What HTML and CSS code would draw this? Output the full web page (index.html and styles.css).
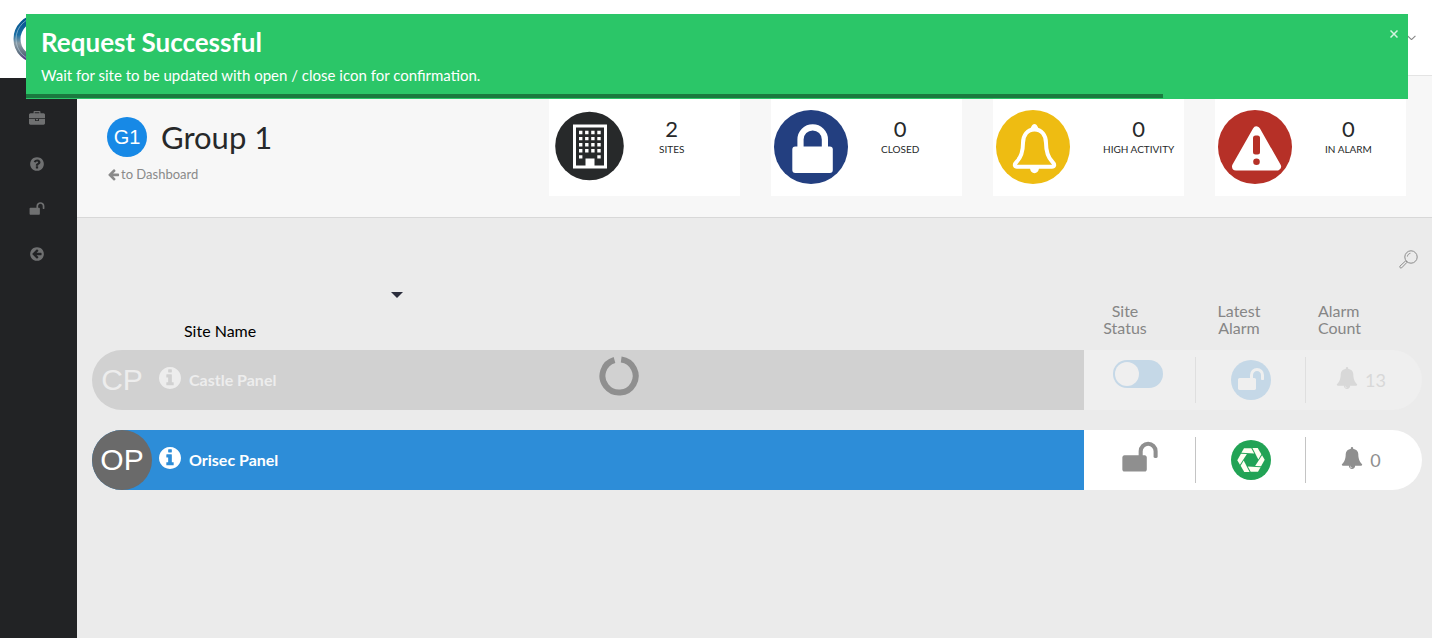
FILE: index.html
```
<!DOCTYPE html>
<html lang="en">
<head>
  <meta charset="UTF-8">
  <meta name="viewport" content="width=device-width, initial-scale=1">
  <title>Group 1</title>
  <link rel="stylesheet" href="styles.css">
</head>
<body>
  <!-- icon set -->
  <svg class="sprite" aria-hidden="true">
    <symbol id="i-briefcase" viewBox="0 0 1792 1792"><path d="M640 256h512v-128h-512v128zm1152 640v480q0 66-47 113t-113 47h-1472q-66 0-113-47t-47-113v-480h672v160q0 26 19 45t45 19h320q26 0 45-19t19-45v-160h672zm-768 0v128h-256v-128h256zm768-480v384h-1792v-384q0-66 47-113t113-47h352v-160q0-40 28-68t68-28h576q40 0 68 28t28 68v160h352q66 0 113 47t47 113z"/></symbol>
    <symbol id="i-question" viewBox="0 0 1792 1792"><path d="M1024 1376v-192q0-14-9-23t-23-9h-192q-14 0-23 9t-9 23v192q0 14 9 23t23 9h192q14 0 23-9t9-23zm256-672q0-88-55.5-163t-138.5-116-170-41q-243 0-371 213-15 24 8 42l132 100q7 6 19 6 16 0 25-12 53-68 86-92 34-24 86-24 48 0 85.5 26t37.5 59q0 38-20 61t-68 45q-63 28-115.5 86.5t-52.5 125.5v36q0 14 9 23t23 9h192q14 0 23-9t9-23q0-19 21.5-49.5t54.5-49.5q32-18 49-28.5t46-35 44.5-48 28-60.5 12.5-81zm384 192q0 209-103 385.5t-279.5 279.5-385.5 103-385.5-103-279.5-279.5-103-385.5 103-385.5 279.5-279.5 385.5-103 385.5 103 279.5 279.5 103 385.5z"/></symbol>
    <symbol id="i-unlock" viewBox="0 0 1792 1792"><path d="M1728 576v256q0 26-19 45t-45 19h-64q-26 0-45-19t-19-45v-256q0-106-75-181t-181-75-181 75-75 181v192h96q40 0 68 28t28 68v576q0 40-28 68t-68 28h-960q-40 0-68-28t-28-68v-576q0-40 28-68t68-28h672v-192q0-185 131.5-316.5t316.5-131.5 316.5 131.5 131.5 316.5z"/></symbol>
    <symbol id="i-circle-left" viewBox="0 0 1792 1792"><path d="M1408 960v-128q0-26-19-45t-45-19h-502l189-189q19-19 19-45t-19-45l-91-91q-18-18-45-18t-45 18l-362 362-91 91q-18 18-18 45t18 45l91 91 362 362q18 18 45 18t45-18l91-91q18-18 18-45t-18-45l-189-189h502q26 0 45-19t19-45zm256-64q0 209-103 385.5t-279.5 279.5-385.5 103-385.5-103-279.5-279.5-103-385.5 103-385.5 279.5-279.5 385.5-103 385.5 103 279.5 279.5 103 385.5z"/></symbol>
    <symbol id="i-left" viewBox="0 0 1792 1792"><path d="M1664 896v128q0 53-32.5 90.5t-84.5 37.5h-704l293 294q38 36 38 90t-38 90l-75 76q-37 37-90 37-52 0-91-37l-651-652q-37-37-37-90 0-52 37-91l651-650q38-38 91-38 52 0 90 38l75 74q38 38 38 91t-38 91l-293 293h704q52 0 84.5 37.5t32.5 90.5z"/></symbol>
    <symbol id="i-info" viewBox="128 128 1536 1536"><path d="M1152 1376v-160q0-14-9-23t-23-9h-96v-512q0-14-9-23t-23-9h-320q-14 0-23 9t-9 23v160q0 14 9 23t23 9h96v320h-96q-14 0-23 9t-9 23v160q0 14 9 23t23 9h448q14 0 23-9t9-23zm-128-896v-160q0-14-9-23t-23-9h-192q-14 0-23 9t-9 23v160q0 14 9 23t23 9h192q14 0 23-9t9-23zm640 416q0 209-103 385.5t-279.5 279.5-385.5 103-385.5-103-279.5-279.5-103-385.5 103-385.5 279.5-279.5 385.5-103 385.5 103 279.5 279.5 103 385.5z"/></symbol>
    <symbol id="i-bell" viewBox="0 0 1792 1792"><path d="M912 1696q0-16-16-16-59 0-101.5-42.5t-42.5-101.5q0-16-16-16t-16 16q0 73 51.5 124.5t124.5 51.5q16 0 16-16zm816-288q0 52-38 90t-90 38h-448q0 106-75 181t-181 75-181-75-75-181h-448q-52 0-90-38t-38-90q50-42 91-88t85-119.5 74.5-158.5 50-206 19.5-260q0-152 117-282.5t307-158.5q-8-19-8-39 0-40 28-68t68-28 68 28 28 68q0 20-8 39 190 28 307 158.5t117 282.5q0 139 19.5 260t50 206 74.5 158.5 85 119.5 91 88z"/></symbol>
  </svg>

  <div class="toast" role="alert">
    <button class="toast-close" aria-label="Close"><svg viewBox="0 0 8 8"><path d="M.5.5l7 7M7.5.5l-7 7"/></svg></button>
    <h2>Request Successful</h2>
    <p>Wait for site to be updated with open / close icon for confirmation.</p>
    <div class="toast-progress"></div>
  </div>

  <div class="app">
    <aside class="side">
      <a class="logo" href="#" aria-label="Home">
        <svg viewBox="0 0 50 50">
          <defs>
            <linearGradient id="ring" x1="0" y1="0" x2="0" y2="1">
              <stop offset="0" stop-color="#00508c"/>
              <stop offset=".4" stop-color="#1b6ea3"/>
              <stop offset=".6" stop-color="#8c9ba5"/>
              <stop offset=".85" stop-color="#5d6f80"/>
              <stop offset="1" stop-color="#5a2a86"/>
            </linearGradient>
          </defs>
          <circle cx="25" cy="25" r="21" fill="none" stroke="url(#ring)" stroke-width="7"/>
          <circle cx="25" cy="25" r="22" fill="none" stroke="#b9d3e4" stroke-width=".6"/>
        </svg>
      </a>
      <nav class="menu">
        <a href="#" aria-label="Sites"><svg><use href="#i-briefcase"/></svg></a>
        <a href="#" aria-label="Help"><svg><use href="#i-question"/></svg></a>
        <a href="#" aria-label="Access"><svg><use href="#i-unlock"/></svg></a>
        <a href="#" aria-label="Back"><svg><use href="#i-circle-left"/></svg></a>
      </nav>
    </aside>

    <div class="main">
      <header class="topbar">
        <button class="user-menu" aria-label="Account"><svg viewBox="0 0 8 5"><path d="M.5.7l3.5 3.4L7.5.7"/></svg></button>
      </header>

      <section class="group-head">
        <div class="group">
          <h1><span class="badge">G1</span>Group 1</h1>
          <a href="#" class="back"><svg><use href="#i-left"/></svg>to Dashboard</a>
        </div>

        <div class="cards">
          <div class="card">
            <svg class="card-icon" viewBox="0 0 74 74">
              <circle cx="37.5" cy="36" r="34.3" fill="#27292a"/>
              <rect x="22.500" y="16" width="31" height="41" fill="none" stroke="#fff" stroke-width="3"/>
              <g stroke="#fff" stroke-width="3.4" stroke-dasharray="3.4 2.7">
                <path d="M27 22.500h22M27 28.600h22M27 34.700h22M27 40.800h22"/>
              </g>
              <path d="M27 45.200h3.400v3.400H27zM45.300 45.200h3.400v3.400h-3.400zM33.500 48.500h9V57h-9z" fill="#fff"/>
            </svg>
            <div class="stat"><b>2</b><span>SITES</span></div>
          </div>
          <div class="card">
            <svg class="card-icon" viewBox="0 0 74 74">
              <circle cx="37" cy="37" r="37" fill="#233f80"/>
              <path d="M26.500 38V29.500a12.200 12.200 0 0 1 24.400 0V38" fill="none" stroke="#fff" stroke-width="6.200"/>
              <rect x="18.300" y="36.500" width="40.500" height="26.500" rx="3" fill="#fff"/>
            </svg>
            <div class="stat"><b>0</b><span>CLOSED</span></div>
          </div>
          <div class="card">
            <svg class="card-icon" viewBox="0 0 74 74">
              <circle cx="37" cy="37" r="37" fill="#eebc12"/>
              <path d="M38.500 19.500C31.500 19.500 27 25 27 33c0 10-2.500 15-6.500 19-3 3-1.500 4.700.5 4.700h35c2 0 3.500-1.700.5-4.700-4-4-6.500-9-6.500-19 0-8-4.500-13.500-11.500-13.500z" fill="none" stroke="#fff" stroke-width="4"/>
              <path d="M33.500 19.500c1.500-1 2-5.500 5-5.500s3.500 4.500 5 5.500zM34 57.500h9c0 7.500-9 7.500-9 0z" fill="#fff"/>
            </svg>
            <div class="stat"><b>0</b><span>HIGH ACTIVITY</span></div>
          </div>
          <div class="card">
            <svg class="card-icon" viewBox="0 0 74 74">
              <circle cx="37" cy="37" r="37" fill="#b63027"/>
              <path d="M38.500 20.500L59 56.500H18z" fill="#fff" stroke="#fff" stroke-width="8" stroke-linejoin="round"/>
              <rect x="35" y="25.500" width="7" height="19" rx="2.500" fill="#b63027"/>
              <circle cx="38.500" cy="51.700" r="3.300" fill="#b63027"/>
            </svg>
            <div class="stat"><b>0</b><span>IN ALARM</span></div>
          </div>
        </div>
      </section>

      <section class="content">
        <button class="search" aria-label="Search">
          <svg viewBox="0 0 19 19">
            <circle cx="12" cy="7" r="6.2"/>
            <path d="M8.400 6.500c.2-1.700 1.300-2.900 3-3.200M7.300 11.200L8 12M6.600 10.900l-5.700 5.300c-.8.9.8 2.500 1.700 1.700l5.400-5.600z"/>
          </svg>
        </button>

        <table class="sites">
          <thead>
            <tr>
              <th class="col-name"><button class="sort" aria-label="Sort by site name"></button>Site Name</th>
              <th class="col-status">Site<br>Status</th>
              <th class="col-latest">Latest<br>Alarm</th>
              <th class="col-count">Alarm<br>Count</th>
            </tr>
          </thead>
          <tbody>
            <tr class="site loading">
              <td class="name">
                <div class="name-row">
                  <span class="initials">CP</span>
                  <svg class="info"><use href="#i-info"/></svg>
                  <span class="title">Castle Panel</span>
                </div>
                <div class="spinner"><svg viewBox="0 0 40 40"><path d="M22.200 3.500a16.600 16.600 0 1 1-6.700.5"/></svg></div>
              </td>
              <td><div class="cell"><input type="checkbox" class="switch" aria-label="Castle Panel status"></div></td>
              <td><div class="cell"><span class="dot"><svg><use href="#i-unlock"/></svg></span></div></td>
              <td><div class="cell count"><svg><use href="#i-bell"/></svg>13</div></td>
            </tr>
            <tr class="gap" aria-hidden="true"><td colspan="4"></td></tr>
            <tr class="site">
              <td class="name">
                <div class="name-row">
                  <span class="initials">OP</span>
                  <svg class="info"><use href="#i-info"/></svg>
                  <span class="title">Orisec Panel</span>
                </div>
              </td>
              <td><div class="cell"><svg class="unlocked"><use href="#i-unlock"/></svg></div></td>
              <td>
                <div class="cell">
                  <svg class="aperture" viewBox="-20 -20 40 40">
                    <defs><path id="blade" d="M-9.600-7.200L-7-11.800H.3L3.200-6.600z"/></defs>
                    <circle r="20" fill="#22a355"/>
                    <g fill="#fffef0">
                      <use href="#blade"/>
                      <use href="#blade" transform="rotate(60)"/>
                      <use href="#blade" transform="rotate(120)"/>
                      <use href="#blade" transform="rotate(180)"/>
                      <use href="#blade" transform="rotate(240)"/>
                      <use href="#blade" transform="rotate(300)"/>
                    </g>
                  </svg>
                </div>
              </td>
              <td><div class="cell count"><svg><use href="#i-bell"/></svg>0</div></td>
            </tr>
          </tbody>
        </table>
      </section>
    </div>
  </div>
</body>
</html>
```
FILE: styles.css
```
* {
  box-sizing: border-box;
}

body {
  margin: 0;
  font-family: Lato, "Open Sans", sans-serif;
  font-size: 16px;
  color: #27292a;
  background: #ebebeb;
}

h1, h2, p {
  margin: 0;
}

a {
  color: inherit;
  text-decoration: none;
}

button {
  padding: 0;
  border: 0;
  background: none;
  cursor: pointer;
}

svg {
  display: block;
  fill: currentColor;
}

.sprite {
  display: none;
}

/* toast */
.toast {
  position: fixed;
  top: 14px;
  left: 26px;
  right: 24px;
  z-index: 10;
  padding-bottom: 1px;
  background: #2bc668;
  color: #fff;
}

.toast h2 {
  padding: 13px 15px 0;
  font-size: 26px;
  line-height: 30px;
}

.toast p {
  padding: 8px 15px 9px;
  font-size: 15px;
  line-height: 20px;
}

.toast-close {
  float: right;
  margin: 16px 10px 0 0;
}

.toast-close svg {
  width: 8px;
  stroke: #fff;
  stroke-width: 1.5;
  opacity: .8;
}

.toast-progress {
  width: 82.3%;
  height: 4px;
  background: #1a7a3f;
}

/* frame */
.app {
  display: flex;
  min-height: 100vh;
}

.side {
  flex: none;
  display: flex;
  flex-direction: column;
  width: 77px;
  background: #222325;
}

.logo {
  height: 78px;
  padding: 14px 13px;
  background: #fff;
}

.logo svg {
  width: 50px;
}

.menu {
  display: flex;
  flex-direction: column;
  align-items: center;
  gap: 29px;
  padding: 33px 3px 0 0;
  color: #6f7071;
}

.menu svg {
  width: 16px;
  height: 16px;
}

.main {
  flex: 1;
  min-width: 0;
}

.topbar {
  display: flex;
  justify-content: flex-end;
  align-items: center;
  height: 76px;
  padding-right: 16px;
  background: #fff;
  border-bottom: 1px solid #e4e4e4;
}

.user-menu svg {
  width: 9px;
  fill: none;
  stroke: #888;
}

.group-head {
  display: flex;
  justify-content: space-between;
  gap: 30px;
  height: 142px;
  padding: 21px 26px 21px 30px;
  background: #f7f7f7;
  border-bottom: 1px solid #d8d8d8;
}

.group h1 {
  display: flex;
  align-items: center;
  gap: 14px;
  margin-top: 20px;
  font-size: 31px;
  font-weight: 400;
  line-height: 40px;
  white-space: nowrap;
}

.badge {
  width: 40px;
  border-radius: 50%;
  background: #1789e6;
  color: #fff;
  font-family: "Liberation Sans", sans-serif;
  font-size: 20px;
  text-align: center;
}

.back {
  display: flex;
  align-items: center;
  gap: 1px;
  margin-top: 8px;
  font-size: 13px;
  line-height: 18px;
  color: #8a8a8a;
}

.back svg {
  width: 13px;
  height: 13px;
}

.cards {
  display: grid;
  grid-template-columns: repeat(4, 191px);
  gap: 31px;
}

.card {
  display: flex;
  align-items: flex-start;
  gap: 33px;
  padding: 13px 3px 0;
  background: #fff;
}

.card-icon {
  flex: none;
  width: 74px;
  height: 74px;
}

.stat {
  display: flex;
  flex-direction: column;
  align-items: center;
  padding-top: 6px;
  white-space: nowrap;
}

.stat b {
  font-size: 22px;
  font-weight: 400;
  line-height: 26px;
}

.stat span {
  font-size: 10px;
  line-height: 14px;
}

/* site list */
.content {
  padding: 32px 10px 20px 15px;
}

.search {
  display: block;
  margin: 0 4px 0 auto;
}

.search svg {
  width: 19px;
  fill: none;
  stroke: #8c8c8c;
}

.sites {
  width: 100%;
  margin-top: 23px;
  table-layout: fixed;
  border-collapse: separate;
  border-spacing: 0;
}

th {
  padding: 0 0 14px;
  font-weight: 400;
  line-height: 17px;
  color: #868686;
  vertical-align: bottom;
}

.col-name {
  padding: 0 0 11px 92px;
  text-align: left;
  color: #000;
}

.sort {
  display: block;
  margin: 0 0 24px 207px;
  border: 6px solid transparent;
  border-top-color: #2b2d3c;
  border-bottom: 0;
}

.col-status {
  width: 112px;
  padding-right: 30px;
}

.col-latest {
  width: 110px;
  padding-right: 24px;
}

.col-count {
  width: 116px;
  padding-left: 12px;
  text-align: left;
}

td {
  padding: 0;
}

.site td {
  height: 60px;
  background: #fff;
}

.site td:last-child {
  border-radius: 0 30px 30px 0;
}

.gap td {
  height: 20px;
}

.site .name {
  position: relative;
  border-radius: 30px 0 0 30px;
  background: #2d8dd8;
  color: #fff;
}

.name-row {
  display: flex;
  align-items: center;
}

.initials {
  width: 60px;
  border-radius: 50%;
  background: #6a6a6a;
  font-family: "Liberation Sans", sans-serif;
  font-size: 30px;
  line-height: 60px;
  text-align: center;
}

.info {
  width: 22px;
  height: 22px;
  margin: 0 8px 4px 7px;
}

.title {
  padding-bottom: 2px;
  font-weight: 700;
}

.cell {
  display: flex;
  align-items: center;
  justify-content: center;
  height: 46px;
  color: #8f8f8f;
}

td:not(:last-child) .cell {
  border-right: 1px solid #c4c4c4;
}

.unlocked {
  width: 38px;
  height: 38px;
  margin-bottom: 4px;
}

.aperture,
.dot {
  width: 40px;
  height: 40px;
}

.dot {
  display: grid;
  place-items: center;
  border-radius: 50%;
  background: #c5d8e7;
  color: #efefef;
}

.dot svg {
  width: 28px;
  height: 28px;
}

.count {
  gap: 7px;
  padding-right: 6px;
  font-size: 18px;
}

.count svg {
  width: 22px;
  height: 22px;
  margin-bottom: 4px;
}

.switch {
  appearance: none;
  width: 50px;
  height: 28px;
  margin: 0 4px 12px 0;
  padding: 2px;
  border-radius: 14px;
  background: #c5d8e7;
}

.switch::before {
  content: "";
  display: block;
  width: 24px;
  height: 24px;
  border-radius: 50%;
  background: #efefef;
}

/* row waiting for an update */
.loading td {
  background: #efefef;
}

.loading .name {
  background: #d1d1d1;
  color: #ededed;
}

.loading .initials {
  background: none;
}

.loading td:not(:last-child) .cell {
  border-color: #dfdfdf;
}

.loading .cell {
  color: #d8d8d8;
}

.spinner {
  position: absolute;
  inset: 0 0 8px 61px;
  display: grid;
  place-items: center;
}

.spinner svg {
  width: 40px;
  fill: none;
  stroke: #8f8f8f;
  stroke-width: 6;
}
```
